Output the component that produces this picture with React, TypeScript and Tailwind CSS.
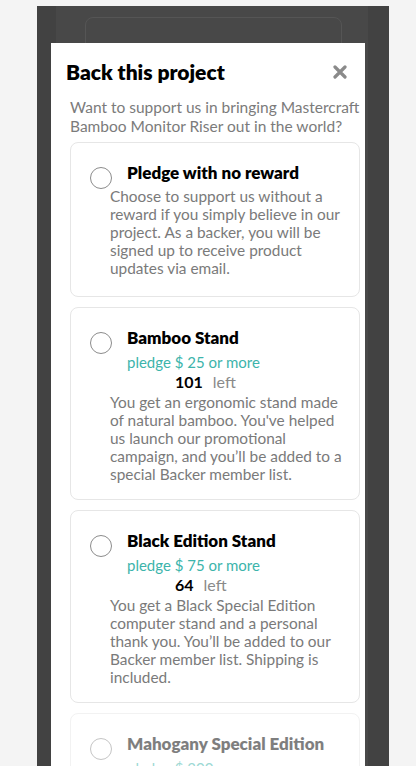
import React from 'react';

type Reward = {
  title: string;
  pledge?: string;
  left?: string;
  text: string;
  disabled?: boolean;
};

const rewards: Reward[] = [
  {
    title: 'Pledge with no reward',
    text: 'Choose to support us without a reward if you simply believe in our project. As a backer, you will be signed up to receive product updates via email.',
  },
  {
    title: 'Bamboo Stand',
    pledge: 'pledge $ 25 or more',
    left: '101',
    text: "You get an ergonomic stand made of natural bamboo. You've helped us launch our promotional campaign, and you\u2019ll be added to a special Backer member list.",
  },
  {
    title: 'Black Edition Stand',
    pledge: 'pledge $ 75 or more',
    left: '64',
    text: 'You get a Black Special Edition computer stand and a personal thank you. You\u2019ll be added to our Backer member list. Shipping is included.',
  },
  {
    title: 'Mahogany Special Edition',
    pledge: 'pledge $ 200 or more',
    left: '0',
    text: 'You get two Special Edition Mahogany stands, a Backer T-Shirt, and a personal thank you. You\u2019ll be added to our Backer member list. Shipping is included.',
    disabled: true,
  },
];

function RewardCard({ reward }: { reward: Reward }) {
  return (
    <div
      className={`rounded-lg border border-[#e6e6e6] pt-[19px] pl-[19px] pr-[12px] ${
        reward.left ? 'pb-[16px]' : 'pb-[19px]'
      } ${reward.disabled ? 'opacity-50' : ''}`}
    >
      <div className="flex items-start">
        <span className="mt-[5px] h-[22px] w-[22px] shrink-0 rounded-full border border-[#8c8c8c]" />
        <div className="ml-[15px]">
          <h3 className="text-[17px] leading-[22px] font-extrabold text-black">{reward.title}</h3>
          {reward.pledge && (
            <p className="mt-[2px] text-[15px] leading-[22px] text-[#3cb4ab]">{reward.pledge}</p>
          )}
        </div>
      </div>
      {reward.left && (
        <div className="flex items-baseline pl-[85px] leading-[18px]">
          <span className="text-[16px] font-bold text-black">{reward.left}</span>
          <span className="ml-[10px] text-[16px] text-[#8a8a8a]">left</span>
        </div>
      )}
      <p
        className={`pl-[20px] text-[15.4px] leading-[18px] text-[#7a7a7a] ${
          reward.left ? 'mt-[2px]' : '-mt-[2px]'
        }`}
      >
        {reward.text}
      </p>
    </div>
  );
}

export default function App() {
  return (
    <div className="h-[766px] overflow-hidden bg-[#f4f4f4] pl-[37px] pt-[6px] font-['Lato',_'Noto_Sans',_sans-serif]">
      <div className="relative flex h-[760px] w-[352px] bg-[#424242]">
        {/* page behind the overlay */}
        <div className="ml-[19px] h-full w-[312px] bg-[#484848] pl-[29px] pt-[11px]">
          <div className="h-[120px] w-[257px] rounded-lg border border-[#555]" />
        </div>

        {/* modal */}
        <div className="absolute left-[14px] top-[37px] bottom-0 w-[314px] bg-white">
          <div className="mt-[15px] flex h-[28px] items-center justify-between pl-[15px] pr-[18px]">
            <h2 className="text-[21px] font-extrabold text-black">Back this project</h2>
            <svg width="14" height="14" viewBox="0 0 14 14">
              <path d="M2 2L12 12M12 2L2 12" stroke="#8a8a8a" strokeWidth="3.2" strokeLinecap="round" />
            </svg>
          </div>
          <p className="mt-[12px] pl-[19px] pr-[2px] text-[15.5px] leading-[19px] text-[#7b7b7b]">
            Want to support us in bringing Mastercraft Bamboo Monitor Riser out in the world?
          </p>
          <div className="mt-[6px] ml-[19px] mr-[5px] flex flex-col gap-[10px]">
            {rewards.map((r) => (
              <RewardCard key={r.title} reward={r} />
            ))}
          </div>
        </div>
      </div>
    </div>
  );
}
